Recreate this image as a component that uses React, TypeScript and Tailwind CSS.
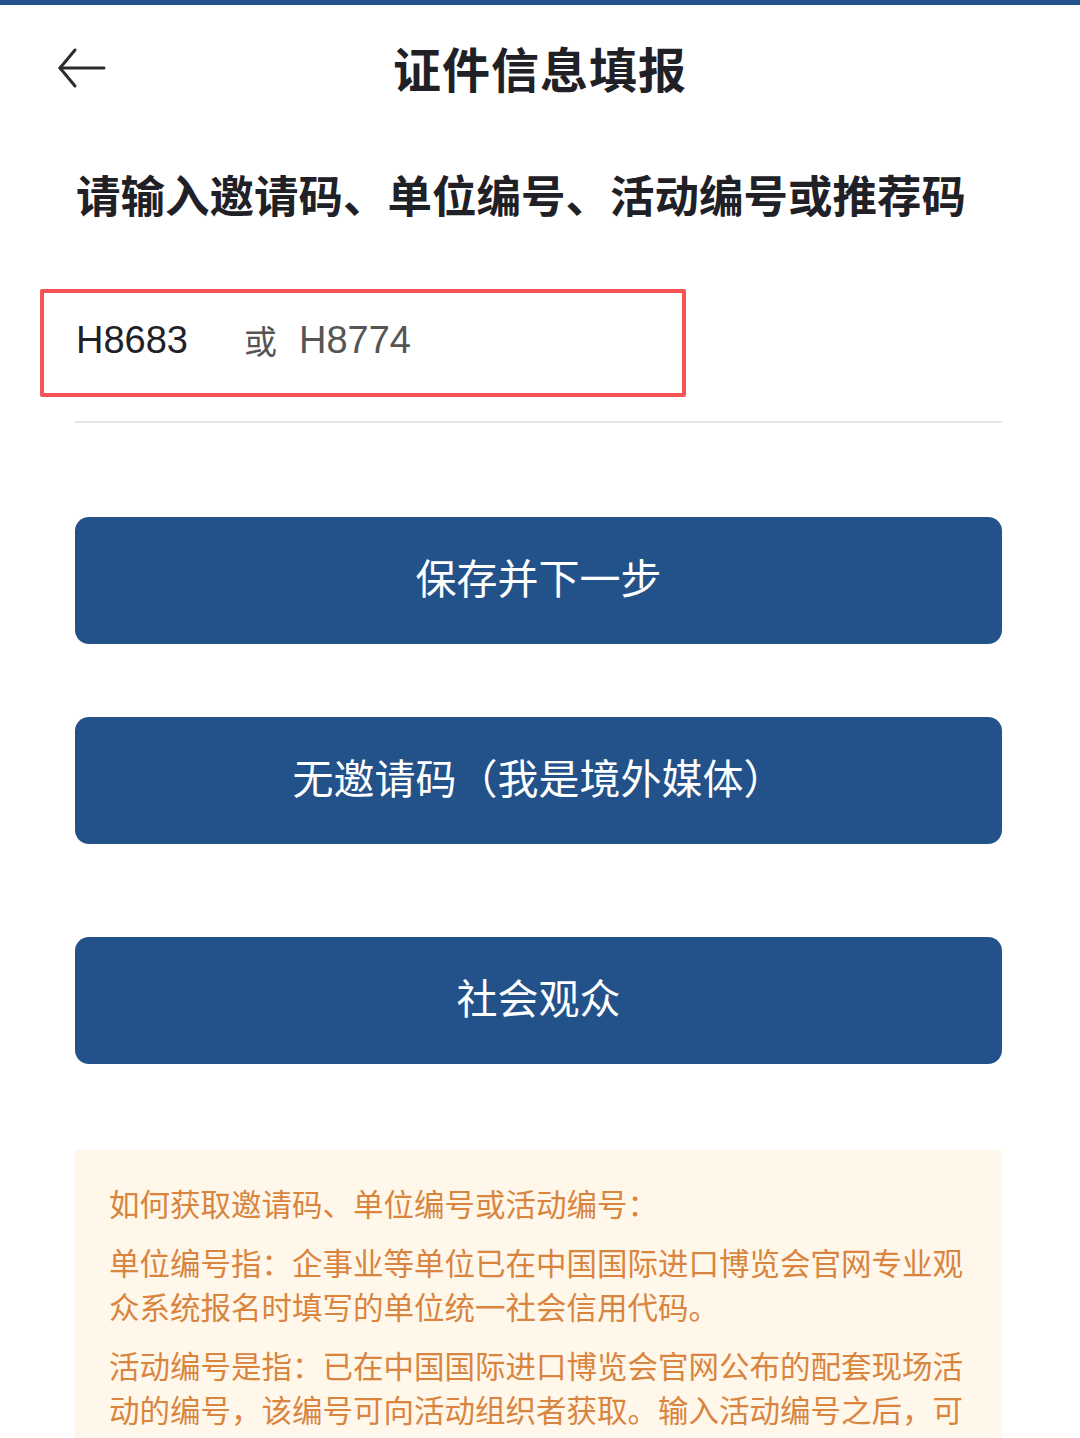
import React from 'react';

const font = { fontFamily: '"Noto Sans CJK SC", "Noto Sans", sans-serif' };
const latin = { fontFamily: '"Liberation Sans", "Noto Sans CJK SC", sans-serif' };

function BackArrow() {
  return (
    <svg width="50" height="42" viewBox="0 0 50 42" fill="none" stroke="#2a2c30" strokeWidth="3" strokeLinecap="round" strokeLinejoin="round">
      <line x1="3" y1="21" x2="47" y2="21" />
      <polyline points="18,3 3,21 18,39" />
    </svg>
  );
}

export default function App() {
  const buttons = ['保存并下一步', '无邀请码（我是境外媒体）', '社会观众'];

  return (
    <div className="w-[1080px] h-[1438px] overflow-hidden bg-white" style={font}>
      {/* top bar */}
      <div className="h-[5px] bg-[#23528a]" />

      {/* header */}
      <div className="h-[124px] grid grid-cols-[1fr_auto_1fr] items-center px-[57px]">
        <div className="flex items-center pt-[2px]">
          <BackArrow />
        </div>
        <h1 className="text-[48px] font-bold text-[#1f2126] tracking-[1px]">证件信息填报</h1>
        <div />
      </div>

      {/* prompt */}
      <h2 className="mt-[35px] px-[76px] text-[44.5px] leading-[60px] font-bold text-[#1f2126]">
        请输入邀请码、单位编号、活动编号或推荐码
      </h2>

      {/* input */}
      <div className="mt-[65px] ml-[40px] w-[646px] h-[108px] border-[4px] border-[#f55454] rounded-[2px] flex items-center pl-[32px] pb-[5px]">
        <span className="text-[38px] text-[#1f2126]" style={latin}>H8683</span>
        <span className="ml-[56px] text-[33px] text-[#555555]">或</span>
        <span className="ml-[22px] text-[38px] text-[#555555]" style={latin}>H8774</span>
      </div>
      <div className="mt-[24px] ml-[75px] w-[927px] h-[2px] bg-[#e6e6e6]" />

      {/* buttons */}
      <div className="mt-[94px] ml-[75px] w-[927px] flex flex-col">
        {buttons.map((label, i) => (
          <button
            key={label}
            className={`h-[127px] rounded-[14px] bg-[#23528a] text-white text-[41px] flex items-center justify-center pb-[8px] ${i === 1 ? 'mt-[73px]' : ''} ${i === 2 ? 'mt-[93px]' : ''}`}
          >
            {label}
          </button>
        ))}
      </div>

      {/* notice */}
      <div className="mt-[86px] ml-[75px] w-[927px] bg-[#fff8ea] pt-[31px] pb-[30px] px-[34px] text-[30.5px] leading-[44px] text-[#d9843f] flex flex-col gap-[15px]">
        <p>如何获取邀请码、单位编号或活动编号：</p>
        <p>单位编号指：企事业等单位已在中国国际进口博览会官网专业观众系统报名时填写的单位统一社会信用代码。</p>
        <p>活动编号是指：已在中国国际进口博览会官网公布的配套现场活动的编号，该编号可向活动组织者获取。输入活动编号之后，可进入活动报名流程。</p>
      </div>
    </div>
  );
}
